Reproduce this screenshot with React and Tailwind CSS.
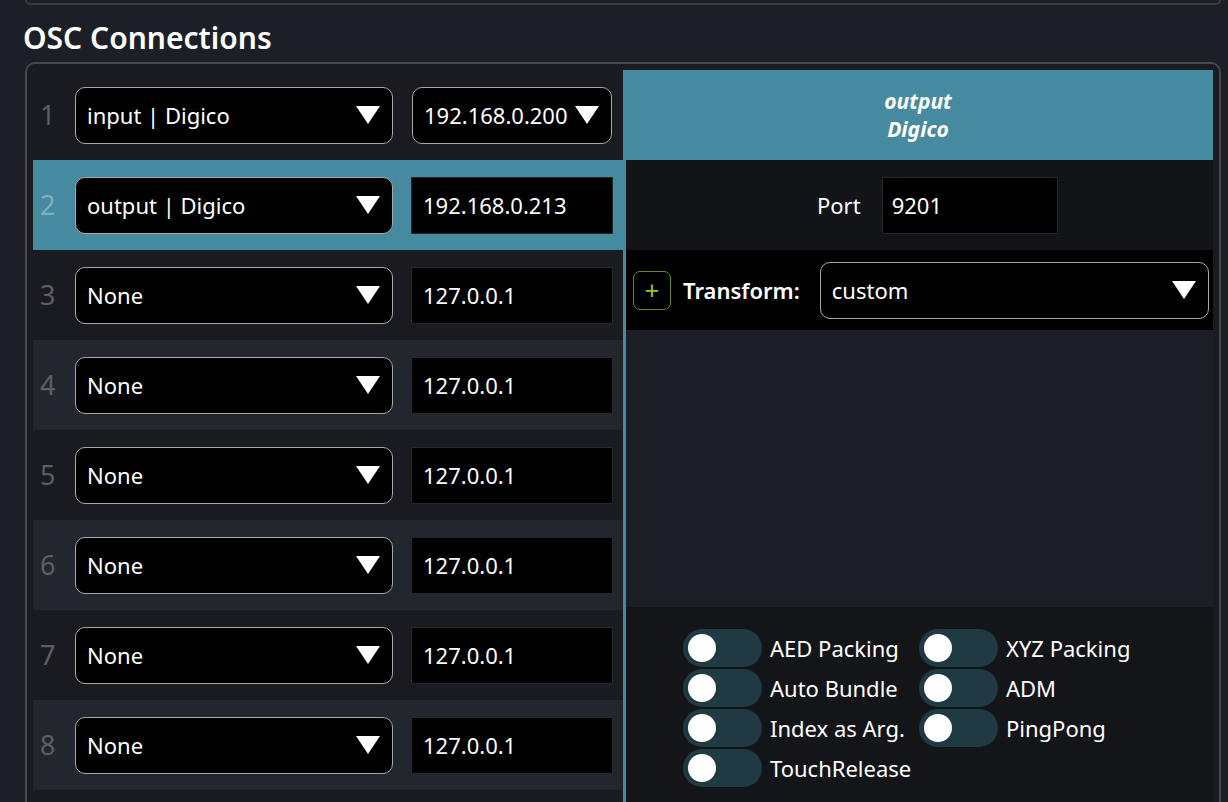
import React from "react";

const rows = [
  { n: 1, dev: "input | Digico", ip: "192.168.0.200", ipSelect: true },
  { n: 2, dev: "output | Digico", ip: "192.168.0.213" },
  { n: 3, dev: "None", ip: "127.0.0.1" },
  { n: 4, dev: "None", ip: "127.0.0.1" },
  { n: 5, dev: "None", ip: "127.0.0.1" },
  { n: 6, dev: "None", ip: "127.0.0.1" },
  { n: 7, dev: "None", ip: "127.0.0.1" },
  { n: 8, dev: "None", ip: "127.0.0.1" },
];

const toggles = [
  "AED Packing",
  "XYZ Packing",
  "Auto Bundle",
  "ADM",
  "Index as Arg.",
  "PingPong",
  "TouchRelease",
];

const Caret = () => (
  <svg width="24" height="18" viewBox="0 0 24 18" className="shrink-0">
    <polygon points="0,0 24,0 12,18" fill="#ffffff" />
  </svg>
);

const Select = ({ value, className = "" }) => (
  <div
    className={`flex h-[57px] items-center justify-between rounded-[10px] border border-[#a8a8a8] bg-black pl-[11px] pr-[12px] text-[22px] text-white ${className}`}
  >
    <span>{value}</span>
    <Caret />
  </div>
);

const Toggle = ({ label }) => (
  <div className="flex h-[40px] items-center">
    <div className="flex h-[38px] w-[79px] items-center rounded-full bg-[#203a44] pl-[5px]">
      <div className="h-[28px] w-[28px] rounded-full bg-white" />
    </div>
    <span className="ml-[8px] text-[22px] text-white">{label}</span>
  </div>
);

export default function App() {
  return (
    <div
      className="h-[802px] w-[1228px] overflow-hidden bg-[#1c1f26] text-white"
      style={{ fontFamily: '"Noto Sans", "Open Sans", sans-serif' }}
    >
      {/* bottom edge of the panel above */}
      <div className="ml-[25px] h-[5px] w-[1196px] rounded-b-[8px] border-2 border-t-0 border-[#3a3c41]" />

      <h1 className="ml-[23px] mt-[15px] text-[30px] font-semibold leading-[36px]">
        OSC Connections
      </h1>

      <div className="ml-[25px] mt-[6px] w-[1196px] rounded-[10px] border-2 border-[#46484d] bg-[#1a1b20] p-[6px]">
        <div className="flex">
          {/* Connection list */}
          <div className="flex w-[590px] flex-col">
            {rows.map((row) => {
              const selected = row.n === 2;
              const bg = selected
                ? "bg-[#468a9f]"
                : row.n % 2 === 0
                ? "bg-[#24262d]"
                : "bg-[#1a1b20]";
              return (
                <div
                  key={row.n}
                  className={`flex h-[90px] items-center pl-[7px] ${bg}`}
                >
                  <span
                    className={`w-[35px] text-[27px] ${
                      selected ? "text-[#7fb0c0]" : "text-[#5c5f66]"
                    }`}
                  >
                    {row.n}
                  </span>
                  <Select value={row.dev} className="w-[318px]" />
                  {row.ipSelect ? (
                    <Select value={row.ip} className="ml-[19px] w-[200px]" />
                  ) : (
                    <div className="ml-[18px] flex h-[57px] w-[202px] items-center border border-[#26272b] bg-black pl-[11px] text-[22px]">
                      {row.ip}
                    </div>
                  )}
                </div>
              );
            })}
          </div>

          {/* Detail panel */}
          <div className="flex w-[590px] flex-col">
            <div className="flex h-[90px] flex-col items-center justify-center bg-[#468a9f] text-[21px] font-bold italic leading-[28px]">
              <span>output</span>
              <span>Digico</span>
            </div>

            <div className="flex flex-col border-l-[3px] border-[#468a9f]">
              <div className="flex h-[90px] items-center bg-[#131418] pl-[191px]">
                <span className="text-[22px]">Port</span>
                <div className="ml-[21px] flex h-[57px] w-[176px] items-center border border-[#26272b] bg-black pl-[9px] text-[22px]">
                  9201
                </div>
              </div>

              <div className="flex h-[80px] items-center bg-black pl-[7px] pr-[4px]">
                <div className="flex h-[39px] w-[38px] items-center justify-center rounded-[7px] border border-[#6b8a1f] text-[26px] leading-none text-[#9cc230]">
                  +
                </div>
                <span className="ml-[12px] text-[22px] font-semibold">
                  Transform:
                </span>
                <Select value="custom" className="ml-[20px] flex-1" />
              </div>

              <div className="h-[277px] bg-[#1b1e25]" />

              <div className="grid h-[220px] grid-cols-[236px_236px] content-start bg-[#141519] pl-[57px] pt-[21px]">
                {toggles.map((t) => (
                  <Toggle key={t} label={t} />
                ))}
              </div>
            </div>
          </div>
        </div>
      </div>
    </div>
  );
}
